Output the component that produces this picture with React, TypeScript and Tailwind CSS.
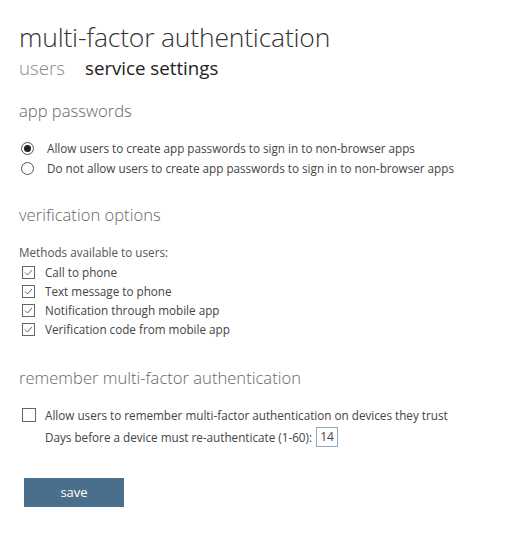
import React from "react";

const font = { fontFamily: '"Open Sans", "Noto Sans", sans-serif' };

function Radio({ checked }: { checked: boolean }) {
  return (
    <span className="w-[13px] h-[13px] rounded-full border border-[#555] flex items-center justify-center shrink-0 bg-white">
      {checked && <span className="w-[7px] h-[7px] rounded-full bg-[#222]" />}
    </span>
  );
}

function Check({ checked }: { checked: boolean }) {
  return (
    <span className="w-[13px] h-[13px] border border-[#666] flex items-center justify-center shrink-0 bg-white">
      {checked && (
        <svg width="9" height="7" viewBox="0 0 9 7" fill="none">
          <path d="M1 3.5 L3.5 6 L8 1" stroke="#666" strokeWidth="1" />
        </svg>
      )}
    </span>
  );
}

export default function App() {
  return (
    <div className="w-[524px] h-[535px] bg-white text-[#333]" style={font}>
      <div className="pl-[19px] pt-[19px]">
        <h1 className="text-[26.5px] leading-[36px] font-light text-[#333] tracking-[-0.2px]">multi-factor authentication</h1>
        <div className="flex gap-[20px] text-[18.7px] leading-[26px] mt-[0px]">
          <span className="text-[#888] font-light">users</span>
          <span className="text-[#222]">service settings</span>
        </div>

        <h2 className="text-[16.6px] leading-[24px] font-light text-[#666] mt-[18px]">app passwords</h2>
        <div className="mt-[18px] flex flex-col gap-[6px] text-[11.7px] leading-[14px] text-[#444]">
          <label className="flex items-center gap-[13px] pl-[2px]"><Radio checked={true} />Allow users to create app passwords to sign in to non-browser apps</label>
          <label className="flex items-center gap-[13px] pl-[2px]"><Radio checked={false} />Do not allow users to create app passwords to sign in to non-browser apps</label>
        </div>

        <h2 className="text-[16.6px] leading-[24px] font-light text-[#666] mt-[28px]">verification options</h2>
        <div className="mt-[18px] text-[11.7px] leading-[14px] text-[#555]">Methods available to users:</div>
        <div className="mt-[6px] flex flex-col gap-[5px] text-[11.7px] leading-[14px] text-[#444]">
          {["Call to phone", "Text message to phone", "Notification through mobile app", "Verification code from mobile app"].map((t) => (
            <label key={t} className="flex items-center gap-[10px] pl-[3px]"><Check checked={true} />{t}</label>
          ))}
        </div>

        <h2 className="text-[16.6px] leading-[24px] font-light text-[#666] mt-[30px]">remember multi-factor authentication</h2>
        <div className="mt-[18px] text-[11.7px] leading-[14px] text-[#444]">
          <label className="flex items-center gap-[9px] pl-[3px]">
            <span className="w-[14px] h-[14px] border border-[#666] bg-white shrink-0" />
            Allow users to remember multi-factor authentication on devices they trust
          </label>
          <div className="flex items-center pl-[26px] mt-[5px]">
            <span>Days before a device must re-authenticate (1-60):</span>
            <span className="ml-[4px] w-[22px] h-[20px] border border-[#8fa9c4] flex items-center justify-center text-[12px]">14</span>
          </div>
        </div>

        <button className="mt-[31px] ml-[5px] w-[100px] h-[29px] bg-[#4a6f8c] text-white text-[13px]">save</button>
      </div>
    </div>
  );
}
